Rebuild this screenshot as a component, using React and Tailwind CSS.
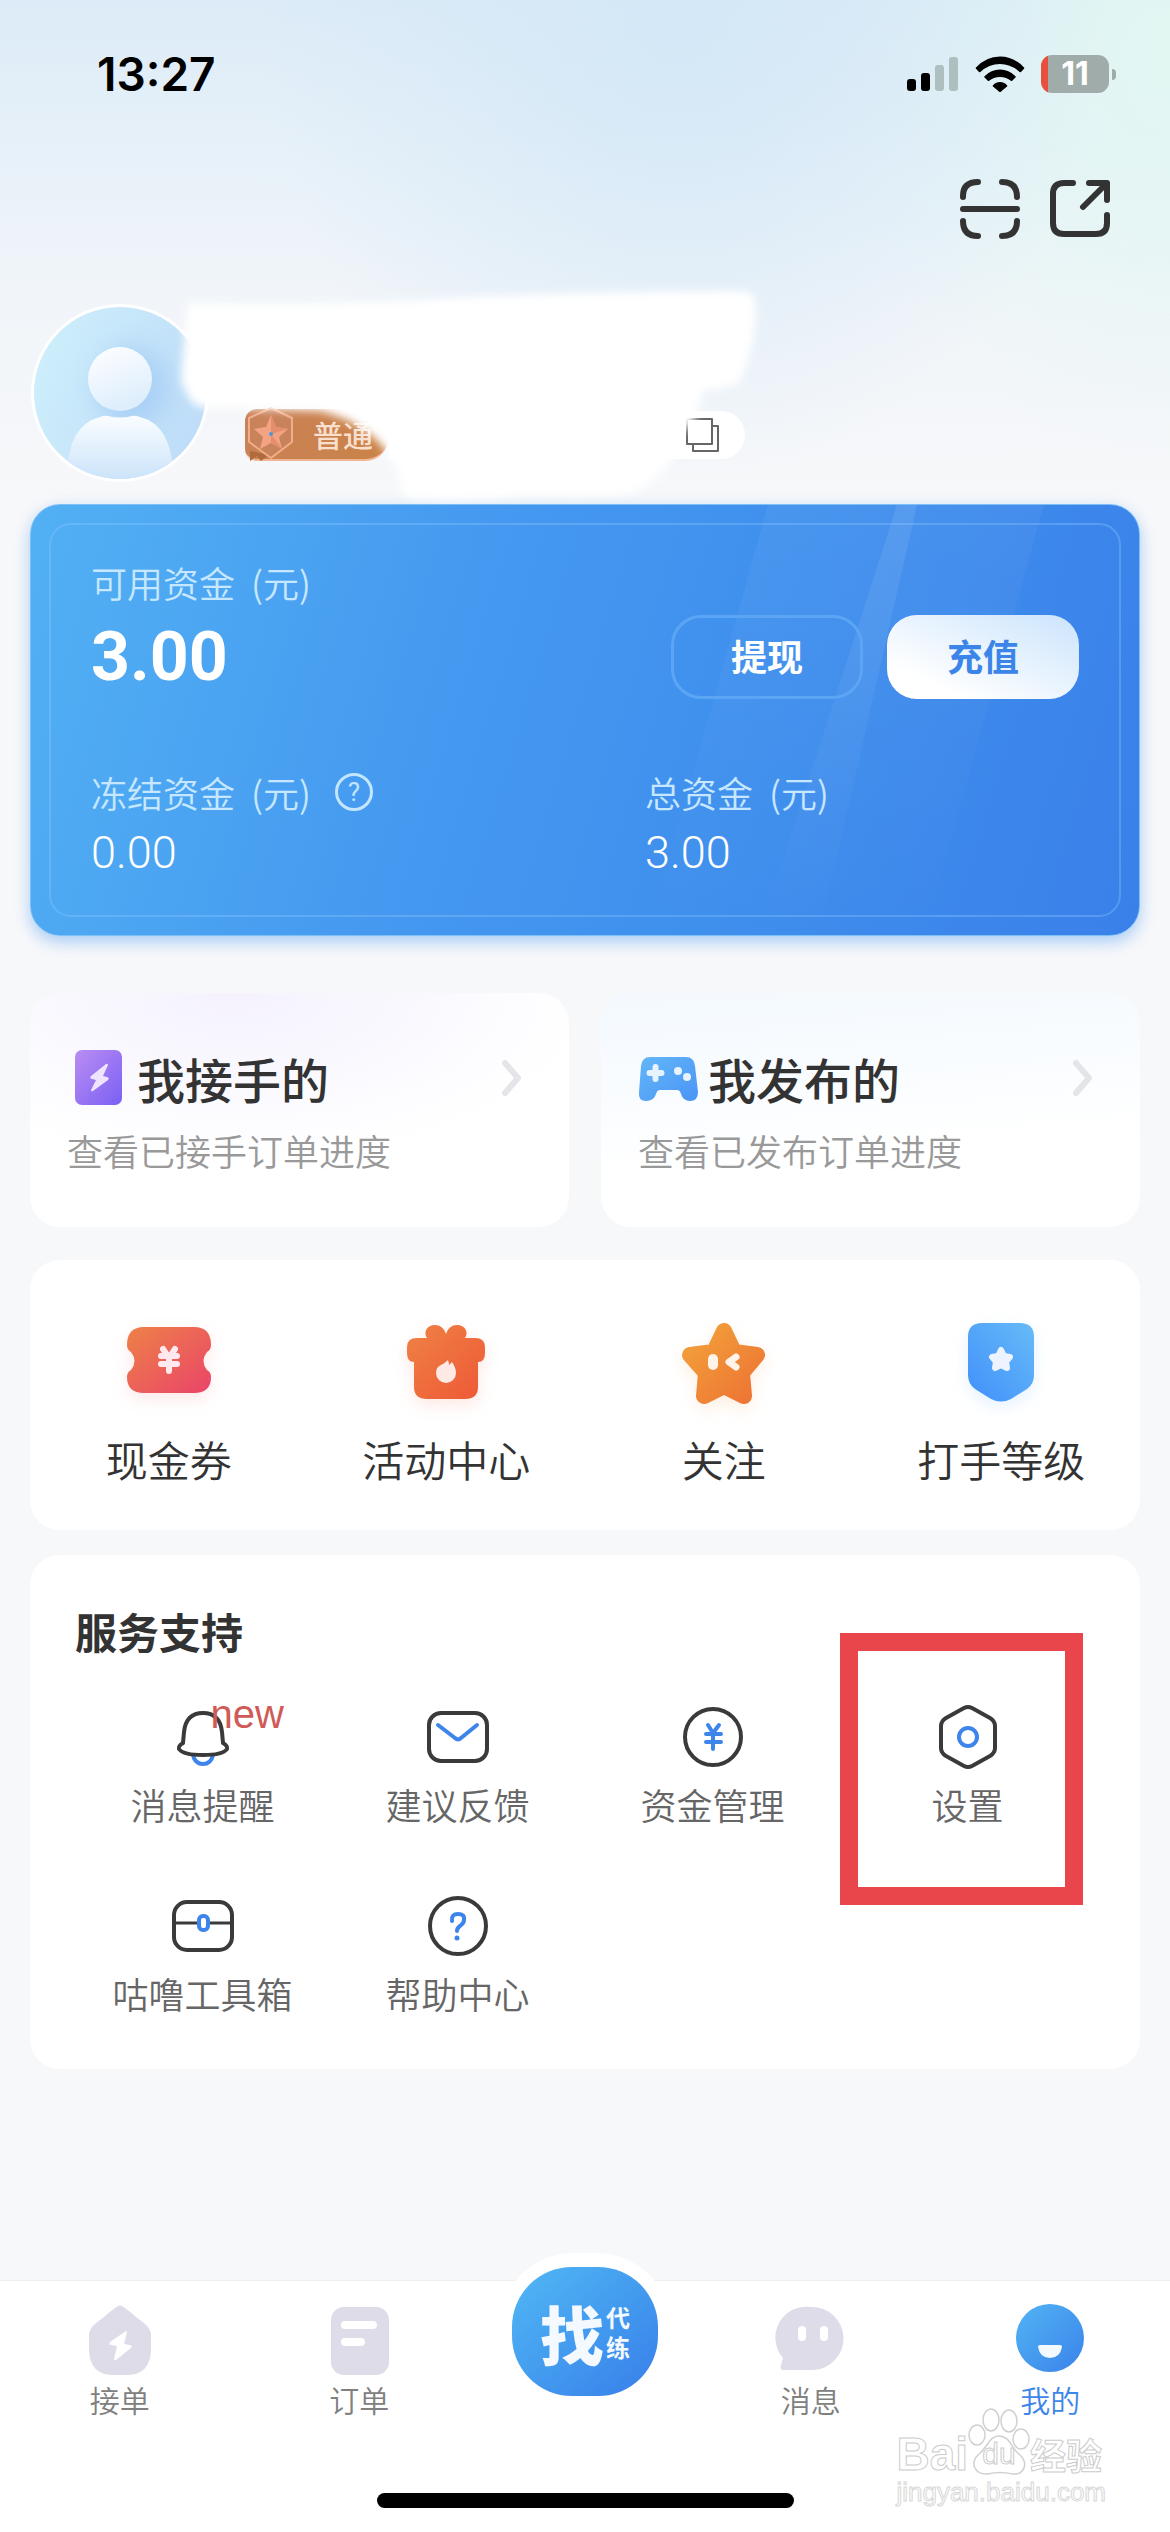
import React from "react";

function StatusBar() {
  return (
    <header className="flex h-37 items-center justify-between pr-[54px] pl-[97px] text-black">
      <time className="font-['Inter',sans-serif] text-[46px] leading-none font-semibold">13:27</time>
      <div className="flex items-center gap-4">
        <svg className="h-9 w-[52px]" viewBox="0 0 52 36" aria-hidden="true">
          <rect x="0" y="23" width="9" height="12" rx="3" />
          <rect x="14" y="17" width="9" height="18" rx="3" />
          <rect x="28" y="9" width="9" height="26" rx="3" fill="#aebfc0" />
          <rect x="42" y="1" width="9" height="34" rx="3" fill="#aebfc0" />
        </svg>
        <svg className="h-9 w-[50px]" viewBox="0 0 50 36" aria-hidden="true">
          <path d="M1 11.500Q11 .5 25 .5t24 11q.6.7 0 1.300L46 16q-.6.6-1.300 0Q36 8 25 8T5.300 16Q4.600 16.600 4 16L1 12.800q-.6-.6 0-1.300Z" />
          <path d="M9.500 20.300Q16 13.500 25 13.500t15.500 6.800q.6.7 0 1.300l-3.300 3.200q-.6.6-1.300 0Q31.500 21 25 21t-10.900 3.800q-.7.6-1.300 0l-3.300-3.200q-.6-.6 0-1.300Z" />
          <path d="M18 29.300Q21 26 25 26t7 3.300q.6.7 0 1.300l-6.200 5.200q-.8.7-1.600 0L18 30.600q-.6-.6 0-1.300Z" />
        </svg>
        <div className="flex items-center gap-[3px]">
          <div className="flex h-[38px] w-[68px] items-center justify-center overflow-hidden rounded-[11px] bg-[linear-gradient(90deg,#e94f3e_7px,#a0acaa_7px)] font-['Inter',sans-serif] text-[32px] leading-none font-bold text-white">
            11
          </div>
          <div className="h-[11px] w-1 rounded-r-full bg-[#a0acaa]" />
        </div>
      </div>
    </header>
  );
}

function Toolbar() {
  const stroke = { fill: "none", stroke: "#333", strokeWidth: 6, strokeLinecap: "round", strokeLinejoin: "round" };
  return (
    <div className="flex justify-end gap-[30px] pt-[31px] pr-15">
      <button type="button" aria-label="扫一扫">
        <svg className="block size-15" viewBox="0 0 60 60" {...stroke}>
          <path d="M3 18V17Q3 3 18 3M42 3Q57 3 57 18M3 42Q3 57 18 57M42 57Q57 57 57 42M3 30H57" />
        </svg>
      </button>
      <button type="button" aria-label="分享">
        <svg className="block size-15" viewBox="0 0 60 60" {...stroke}>
          <path d="M23 4H14Q3 4 3 15V44Q3 55 14 55H46Q57 55 57 44V36M39 4H57V21M56 5L33 28" />
        </svg>
      </button>
    </div>
  );
}

function Avatar() {
  return (
    <svg className="block size-45 shrink-0" viewBox="0 0 180 180" role="img" aria-label="头像">
      <defs>
        <linearGradient id="av" x1="0" y1=".3" x2="1" y2=".7">
          <stop offset="0" stopColor="#cdeefb" />
          <stop offset="1" stopColor="#bedcf8" />
        </linearGradient>
        <linearGradient id="head" x1="0" y1="0" x2=".4" y2="1">
          <stop offset="0" stopColor="#fff" />
          <stop offset="1" stopColor="#deeefc" />
        </linearGradient>
        <linearGradient id="torso" x1="0" y1="0" x2="0" y2="1">
          <stop offset="0" stopColor="#fafdff" />
          <stop offset="1" stopColor="#c9e2f9" />
        </linearGradient>
        <filter id="soft" x="-50%" y="-50%" width="200%" height="200%"><feGaussianBlur stdDeviation="12" /></filter>
        <clipPath id="avclip"><circle cx="90" cy="90" r="86" /></clipPath>
      </defs>
      <circle cx="90" cy="90" r="89" fill="#fff" />
      <circle cx="90" cy="90" r="86" fill="url(#av)" />
      <g clipPath="url(#avclip)">
        <ellipse cx="102" cy="84" rx="36" ry="40" fill="#9fc9f4" opacity=".7" filter="url(#soft)" />
        <path d="M37 172Q38 122 70 114Q76 112 78 113Q90 116 102 113Q104 112 110 114Q142 122 143 172V180H37Z" fill="url(#torso)" />
        <circle cx="90" cy="76" r="32" fill="url(#head)" />
      </g>
    </svg>
  );
}

function Profile() {
  return (
    <section className="relative mt-16 flex h-45 items-end gap-[35px] pl-[30px]">
      <Avatar />
      <div className="mb-[22px] flex w-[500px] items-center">
        <div className="flex h-[52px] w-[144px] items-center rounded-xl rounded-br-3xl border-b-2 border-[#f0b694] bg-linear-to-r from-[#c98156] to-[#cb8348]">
          <svg className="h-[54px] w-13" viewBox="0 0 52 54" aria-hidden="true">
            <path d="M5 44V54L12 49L16 54L24 48Z" fill="#b06a3e" />
            <path d="M26 1L47 11V35L26 51L4 35V11Z" fill="#c9835a" stroke="#f2ae8a" strokeWidth="2" strokeLinejoin="round" />
            <path d="M26 8L31 20L43 22L34 30L37 42L26 36L15 42L18 30L9 22L21 20Z" fill="#f3a383" />
            <path d="M26 8V27L43 22L31 20ZM26 27L37 42L26 36Z" fill="#e58e6c" />
            <circle cx="26" cy="27" r="2" fill="#4f96d8" />
          </svg>
          <span className="pl-4 text-[30px] leading-9 font-medium text-[#f8dfce]">普通</span>
        </div>
        <div className="flex h-12 flex-1 items-center justify-end rounded-r-full bg-white pr-6">
          <button type="button" aria-label="复制">
            <svg className="block h-9 w-9" viewBox="0 0 36 36" fill="#fff" stroke="#666" strokeWidth="2" strokeLinejoin="round">
              <path d="M8 9H33V34H8Z" />
              <path d="M2 2H27V27H2Z" />
            </svg>
          </button>
        </div>
      </div>
      <svg className="pointer-events-none absolute top-[-20px] left-[170px] h-[230px] w-[600px]" viewBox="0 0 600 230" aria-hidden="true">
        <defs><filter id="smudge" x="-10%" y="-10%" width="120%" height="120%"><feGaussianBlur stdDeviation="4" /></filter></defs>
        <path
          d="M18 20Q160 24 300 14Q440 8 574 8Q586 10 586 26Q584 70 570 98Q560 106 532 108Q530 140 508 152Q506 190 462 210Q420 216 360 212Q290 224 242 217Q230 214 230 196L224 180Q202 140 150 128L30 124Q18 120 11 96Q14 60 18 20Z"
          fill="#fff"
          filter="url(#smudge)"
        />
      </svg>
    </section>
  );
}

function FundLabel({ children }) {
  return (
    <p className="flex items-center gap-4 text-[36px] leading-12 font-[350] text-[#c6e7ff]">
      <span>{children}</span>
      <span>(元)</span>
    </p>
  );
}

function FundsCard() {
  return (
    <section className="relative mt-[21px] rounded-[30px] border border-[#7dc0f8] bg-[linear-gradient(107deg,#52b0f3_0%,#4599f0_38%,#3f8fed_65%,#3a80e9_100%)] pt-[53px] pb-[58px] shadow-[0_6px_16px_rgba(70,150,240,0.45)]">
      <div className="pointer-events-none absolute inset-0 overflow-hidden rounded-[30px]" aria-hidden="true">
        <svg className="absolute right-0 h-full w-[510px]" viewBox="0 0 510 432" preserveAspectRatio="none">
          <defs>
            <linearGradient id="ray" x1="0" y1="0" x2="0" y2="1">
              <stop offset="0" stopColor="#fff" stopOpacity=".09" />
              <stop offset="1" stopColor="#fff" stopOpacity="0" />
            </linearGradient>
          </defs>
          <path d="M139 0H415L295 432H19Z" fill="url(#ray)" opacity=".5" />
          <path d="M268 0H288L190 432H130Z" fill="url(#ray)" />
        </svg>
        <div className="absolute inset-[18px] rounded-[22px] border-2 border-[#8cc9ff]/35" />
      </div>
      <div className="relative">
        <div className="px-15">
          <FundLabel>可用资金</FundLabel>
          <div className="mt-[9px] flex items-center gap-6">
            <strong className="mr-auto font-['Roboto',sans-serif] text-[68px] leading-none font-bold text-white">3.00</strong>
            <button type="button" className="h-21 w-48 rounded-[30px] border-3 border-[#5ba5f4] pb-1 text-[36px] leading-12 font-semibold text-white">
              提现
            </button>
            <button type="button" className="h-21 w-48 rounded-[30px] bg-linear-to-tr from-white from-20% to-[#cbe4fc] pb-1 text-[36px] leading-12 font-semibold text-[#3c85e8]">
              充值
            </button>
          </div>
        </div>
        <div className="mt-[69px] grid grid-cols-2">
          <div className="px-15">
            <div className="flex items-center gap-6">
              <FundLabel>冻结资金</FundLabel>
              <button type="button" aria-label="冻结资金说明" className="flex size-[38px] items-center justify-center rounded-full border-3 border-[#c3e6ff] font-['Roboto',sans-serif] text-[26px] leading-none text-[#c3e6ff]">
                ?
              </button>
            </div>
            <p className="mt-[13px] font-['Roboto',sans-serif] text-[45px] leading-12 font-light text-white">0.00</p>
          </div>
          <div className="px-15">
            <FundLabel>总资金</FundLabel>
            <p className="mt-[13px] font-['Roboto',sans-serif] text-[45px] leading-12 font-light text-white">3.00</p>
          </div>
        </div>
      </div>
    </section>
  );
}

function BoltCardIcon() {
  return (
    <svg className="block size-15" viewBox="0 0 60 60" aria-hidden="true">
      <defs>
        <linearGradient id="pur" x1="0" y1="0" x2="1" y2="1">
          <stop offset="0" stopColor="#ba8df2" />
          <stop offset="1" stopColor="#7a60f4" />
        </linearGradient>
      </defs>
      <rect x="8" y="2" width="47" height="55" rx="7" fill="url(#pur)" />
      <path d="M39 16L24 28Q22 30 25 31L29 32L24 42Q24 44 26 43L41 32Q43 30 40 29L36 28L41 17Q41 15 39 16Z" fill="#efe4ff" />
    </svg>
  );
}

function GamepadIcon() {
  return (
    <svg className="block size-15" viewBox="0 0 60 60" aria-hidden="true">
      <defs>
        <linearGradient id="pad" x1="0" y1="0" x2="1" y2="1">
          <stop offset="0" stopColor="#63b7f8" />
          <stop offset="1" stopColor="#4a94f6" />
        </linearGradient>
      </defs>
      <path d="M12 9H48Q56 9 57 18L60 44Q60 53 52 53Q45 53 43 46Q42 42 39 42H22Q19 42 18 46Q16 53 8 53Q0 53 1 44L3 18Q4 9 12 9Z" fill="url(#pad)" />
      <path d="M17.500 19V31M11.500 25H23.500" stroke="#e7f4ff" strokeWidth="6" strokeLinecap="round" />
      <circle cx="40" cy="23" r="4" fill="#e7f4ff" />
      <circle cx="49" cy="29" r="4" fill="#e7f4ff" />
    </svg>
  );
}

function OrderCard({ icon, title, subtitle, tint }) {
  return (
    <a href="#orders" className={`block rounded-[30px] bg-white pt-[55px] pr-[45px] pb-[53px] pl-[37px] ${tint}`}>
      <div className="flex items-center gap-2.5">
        {icon}
        <h2 className="mr-auto text-[48px] leading-15 font-medium text-[#333]">{title}</h2>
        <svg className="h-10 w-6" viewBox="0 0 24 40" fill="none" stroke="#e3e5e8" strokeWidth="6" strokeLinecap="round" strokeLinejoin="round" aria-hidden="true">
          <path d="M5 5L18 20L5 35" />
        </svg>
      </div>
      <p className="mt-[18px] text-[36px] leading-12 font-[350] text-[#999]">{subtitle}</p>
    </a>
  );
}

function Gradient({ id, from, to }) {
  return (
    <linearGradient id={id} x1="0" y1="0" x2="1" y2="1">
      <stop offset="0" stopColor={from} />
      <stop offset="1" stopColor={to} />
    </linearGradient>
  );
}

const features = [
  {
    label: "现金券",
    glow: "drop-shadow-[0_6px_8px_rgba(240,90,90,0.14)]",
    art: (
      <>
        <defs><Gradient id="tk" from="#ee8148" to="#ea4468" /></defs>
        <path d="M23 14H73Q90 14 90 32Q90 37 86 39Q79 48 86 57Q90 59 90 64Q90 80 73 80H23Q6 80 6 64Q6 59 10 57Q17 48 10 39Q6 37 6 32Q6 14 23 14Z" fill="url(#tk)" />
        <path d="M42 36L48 45L54 36M40 43H56M40 51H56M48 44V58" fill="none" stroke="#ffe9ee" strokeWidth="6" strokeLinecap="round" strokeLinejoin="round" />
      </>
    ),
  },
  {
    label: "活动中心",
    glow: "drop-shadow-[0_6px_8px_rgba(240,90,60,0.14)]",
    art: (
      <>
        <defs><Gradient id="gf" from="#ef8245" to="#ee5836" /></defs>
        <path d="M48 21C46 15 42 12 37 12C29 12 25 19 29 25H19Q9 25 9 34V40Q9 49 16 49V74Q16 86 29 86H67Q80 86 80 74V49Q87 49 87 40V34Q87 25 77 25H67C71 19 67 12 59 12C54 12 50 15 48 21Z" fill="url(#gf)" />
        <path d="M50 47Q51 50 51 52L54 49Q58 55 58 60A10 10 0 0 1 38 60Q38 54 43 52Q47 50 50 47Z" fill="#ffe9e4" />
      </>
    ),
  },
  {
    label: "关注",
    glow: "drop-shadow-[0_6px_8px_rgba(245,140,50,0.14)]",
    art: (
      <>
        <defs>
          <linearGradient id="st" gradientUnits="userSpaceOnUse" x1="10" y1="15" x2="80" y2="85">
            <stop offset="0" stopColor="#f3a33a" />
            <stop offset="1" stopColor="#ed7434" />
          </linearGradient>
        </defs>
        <path d="M48 18L58 39L81 42L66 60L68 83L48 73L28 83L30 60L14 42L38 39Z" fill="url(#st)" stroke="url(#st)" strokeWidth="16" strokeLinejoin="round" />
        <path d="M37 46V52" stroke="#fff3ea" strokeWidth="10" strokeLinecap="round" />
        <path d="M60 44L53 49L60 54" fill="none" stroke="#fff3ea" strokeWidth="7" strokeLinecap="round" strokeLinejoin="round" />
      </>
    ),
  },
  {
    label: "打手等级",
    glow: "drop-shadow-[0_6px_8px_rgba(80,160,250,0.14)]",
    art: (
      <>
        <defs>
          <linearGradient id="sh" x1="1" y1="0" x2="0" y2="1">
            <stop offset="0" stopColor="#66bbf7" />
            <stop offset="1" stopColor="#4190fb" />
          </linearGradient>
        </defs>
        <path d="M29 10H67Q81 10 81 24V62Q81 71 74 76L58 86Q48 91 38 86L22 76Q15 71 15 62V24Q15 10 29 10Z" fill="url(#sh)" />
        <path d="M48 37L51 43L57 44L53 49L54 55L48 52L42 55L43 49L39 44L45 43Z" fill="#eef4ff" stroke="#eef4ff" strokeWidth="6" strokeLinejoin="round" />
      </>
    ),
  },
];

const dark = { fill: "none", stroke: "#3a3a3a", strokeWidth: 4, strokeLinejoin: "round", strokeLinecap: "round" };
const blue = { fill: "none", stroke: "#3d85ea", strokeWidth: 4, strokeLinejoin: "round", strokeLinecap: "round" };

const services = [
  {
    label: "消息提醒",
    badge: "new",
    art: (
      <>
        <path d="M26 55Q28 64 36 64T46 55" {...blue} />
        <path d="M36 13Q19 13 17 32L16 43Q11 46 12 49Q16 55 36 55T60 49Q61 46 56 43L55 32Q53 13 36 13Z" {...dark} />
      </>
    ),
  },
  {
    label: "建议反馈",
    art: (
      <>
        <rect x="7" y="13" width="58" height="48" rx="12" {...dark} />
        <path d="M16 25L33 38Q36 41 39 38L55 25" {...blue} />
      </>
    ),
  },
  {
    label: "资金管理",
    art: (
      <>
        <circle cx="36" cy="37" r="28" {...dark} />
        <path d="M31 25L36 33L42 25M29 34H44M29 42H44M36 34V49" {...blue} />
      </>
    ),
  },
  {
    label: "设置",
    highlighted: true,
    art: (
      <>
        <path d="M32 8Q36 6 40 8L58 18Q63 21 63 26V48Q63 53 58 56L40 66Q36 68 32 66L14 56Q9 53 9 48V26Q9 21 14 18Z" {...dark} />
        <circle cx="36" cy="37" r="9" {...blue} />
      </>
    ),
  },
  {
    label: "咕噜工具箱",
    art: (
      <>
        <rect x="7" y="13" width="58" height="48" rx="13" {...dark} />
        <path d="M8 34H30M42 34H64" {...dark} strokeWidth="3" />
        <rect x="32" y="27" width="9" height="14" rx="4" {...blue} />
      </>
    ),
  },
  {
    label: "帮助中心",
    art: (
      <>
        <circle cx="36" cy="37" r="28" {...dark} />
        <path d="M30 32Q29 25 36 25T42 31Q42 34 38 37Q35 39 35 42" {...blue} />
        <circle cx="35" cy="49" r="2.500" fill="#3d85ea" />
      </>
    ),
  },
];

function ServiceItem({ item }) {
  return (
    <li className="relative">
      <a href="#service" className="flex flex-col items-center gap-2">
        <span className="relative">
          <svg className="block size-18" viewBox="0 0 72 72" aria-hidden="true">{item.art}</svg>
          {item.badge && (
            <span className="absolute top-[-6px] left-[44px] font-['Liberation_Sans',sans-serif] text-[40px] leading-none text-[#d05a58]">{item.badge}</span>
          )}
        </span>
        <span className="text-[36px] leading-12 font-[350] text-[#666]">{item.label}</span>
      </a>
      {item.highlighted && (
        <span className="pointer-events-none absolute top-[-67px] left-0 h-[272px] w-[243px] border-18 border-[#e8464b]" />
      )}
    </li>
  );
}

const tabs = {
  take: (
    <>
      <path d="M31 4Q36-1 41 4L61 20Q67 25 67 32V46Q66 71 43 71H29Q6 71 5 46V32Q5 25 11 20Z" fill="#dddce8" />
      <path d="M42 27L26 38Q24 40 27 41L33 42L30 55Q30 57 32 56L47 44Q49 42 46 41L40 40L43 28Z" fill="#fff" />
    </>
  ),
  order: (
    <>
      <rect x="8" y="3" width="58" height="68" rx="13" fill="#dddce8" />
      <path d="M22 21H50M22 38H38" stroke="#fff" strokeWidth="8" strokeLinecap="round" />
    </>
  ),
  message: (
    <>
      <path d="M36 3A31 31 0 0 1 38 66H9Q4 66 6 61L8 54A31 31 0 0 1 36 3Z" fill="#dddce8" />
      <path d="M27 26V33M49 26V33" stroke="#fff" strokeWidth="8" strokeLinecap="round" />
    </>
  ),
  mine: (
    <>
      <defs><Gradient id="me" from="#52b4f4" to="#3a82ea" /></defs>
      <circle cx="36" cy="34" r="34" fill="url(#me)" />
      <path d="M26 41H46Q48 41 48 43Q46 54 36 54T24 43Q24 41 26 41Z" fill="#f3f9ff" />
    </>
  ),
};

function Tab({ icon, label, active }) {
  return (
    <a href="#tab" aria-current={active ? "page" : undefined} className="flex flex-1 flex-col items-center gap-[5px] pt-[23px]">
      <svg className="block size-18" viewBox="0 0 72 72" aria-hidden="true">{icon}</svg>
      <span className={active ? "text-[30px] leading-9 font-[350] text-[#3c85ea]" : "text-[30px] leading-9 font-[350] text-[#808080]"}>{label}</span>
    </a>
  );
}

function Watermark() {
  return (
    <div className="pointer-events-none absolute right-16 bottom-6 text-white" aria-hidden="true">
      <div className="flex items-end leading-none [-webkit-text-stroke:1px_#cccccc]">
        <span className="font-['Liberation_Sans',sans-serif] text-[46px] leading-11 font-bold">Bai</span>
        <span className="relative">
          <svg className="block h-[68px] w-[62px]" viewBox="0 0 62 68" fill="#fff" stroke="#d0d0d0" strokeWidth="1.500">
            <ellipse cx="9" cy="27" rx="8" ry="10" />
            <ellipse cx="23" cy="12" rx="8" ry="11" />
            <ellipse cx="41" cy="13" rx="8" ry="11" />
            <ellipse cx="53" cy="31" rx="8" ry="10" />
            <path d="M31 28C42 28 43 40 51 46C62 56 55 67 45 66Q31 63 20 66C7 67 1 55 11 46C20 39 21 28 31 28Z" />
          </svg>
          <span className="absolute right-0 bottom-2 left-0 text-center font-['Liberation_Sans',sans-serif] text-[30px] leading-7">du</span>
        </span>
        <span className="text-[36px] leading-11 font-bold">经验</span>
      </div>
      <p className="font-['Liberation_Sans',sans-serif] text-[26px] leading-8 [-webkit-text-stroke:1px_#d8d8d8]">jingyan.baidu.com</p>
    </div>
  );
}

function TabBar() {
  return (
    <footer className="relative mt-auto bg-white pb-6 shadow-[0_-1px_0_#eeeff1]">
      <nav className="flex">
        <Tab icon={tabs.take} label="接单" />
        <Tab icon={tabs.order} label="订单" />
        <div className="relative w-[212px]">
          <button type="button" className="absolute top-[-28px] left-1/2 flex h-[157px] w-[174px] -translate-x-1/2 items-center justify-center rounded-[76px] bg-white text-[#f3f9ff]">
            <span className="flex h-[129px] w-[146px] items-center justify-center rounded-[60px] bg-linear-to-br from-[#52b8f4] to-[#387ee9]">
              <span className="text-[64px] leading-none font-black">找</span>
              <span className="flex flex-col gap-1.5 pl-0.5 text-[24px] leading-6 font-bold">
                <span>代</span>
                <span>练</span>
              </span>
            </span>
          </button>
        </div>
        <Tab icon={tabs.message} label="消息" />
        <Tab icon={tabs.mine} label="我的" active />
      </nav>
      <div className="mx-auto mt-[76px] h-[15px] w-[417px] rounded-full bg-black" />
      <Watermark />
    </footer>
  );
}

export default function App() {
  return (
    <div className="flex min-h-screen flex-col bg-[#f7f8fa] bg-[radial-gradient(420px_460px_at_58%_20px,#d4e8f7_0%,#d4e8f700_100%),radial-gradient(340px_420px_at_100%_40px,#e2f7f2_0%,#e2f7f200_100%),linear-gradient(180deg,#dcebf7_0px,#e9f2f9_180px,#f1f5f9_300px,#f7f8fa_520px)] font-['Noto_Sans_CJK_SC',sans-serif]">
      <StatusBar />
      <Toolbar />
      <Profile />
      <main className="px-[30px] pb-12">
        <FundsCard />
        <div className="mt-[57px] grid grid-cols-2 gap-8">
          <OrderCard
            icon={<BoltCardIcon />}
            title="我接手的"
            subtitle="查看已接手订单进度"
            tint="bg-[radial-gradient(360px_170px_at_38%_0,#f5f2fe,#ffffff)]"
          />
          <OrderCard
            icon={<GamepadIcon />}
            title="我发布的"
            subtitle="查看已发布订单进度"
            tint="bg-[linear-gradient(175deg,#f3f9fe_0%,#f9fcff_35%,#ffffff_65%)]"
          />
        </div>
        <ul className="mt-[33px] grid grid-cols-4 rounded-[30px] bg-white pt-[53px] pb-[41px]">
          {features.map((f) => (
            <li key={f.label}>
              <a href="#feature" className="flex flex-col items-center gap-5">
                <svg className={`block size-24 overflow-visible ${f.glow}`} viewBox="0 0 96 96" aria-hidden="true">{f.art}</svg>
                <span className="text-[42px] leading-15 font-[350] text-[#333]">{f.label}</span>
              </a>
            </li>
          ))}
        </ul>
        <section className="mt-[25px] rounded-[30px] bg-white px-[45px] pt-[46px] pb-[52px]">
          <h2 className="text-[42px] leading-15 font-semibold text-[#333]">服务支持</h2>
          <ul className="mt-[39px] grid grid-cols-4 gap-y-[61px]">
            {services.map((s) => (
              <ServiceItem key={s.label} item={s} />
            ))}
          </ul>
        </section>
      </main>
      <TabBar />
    </div>
  );
}
